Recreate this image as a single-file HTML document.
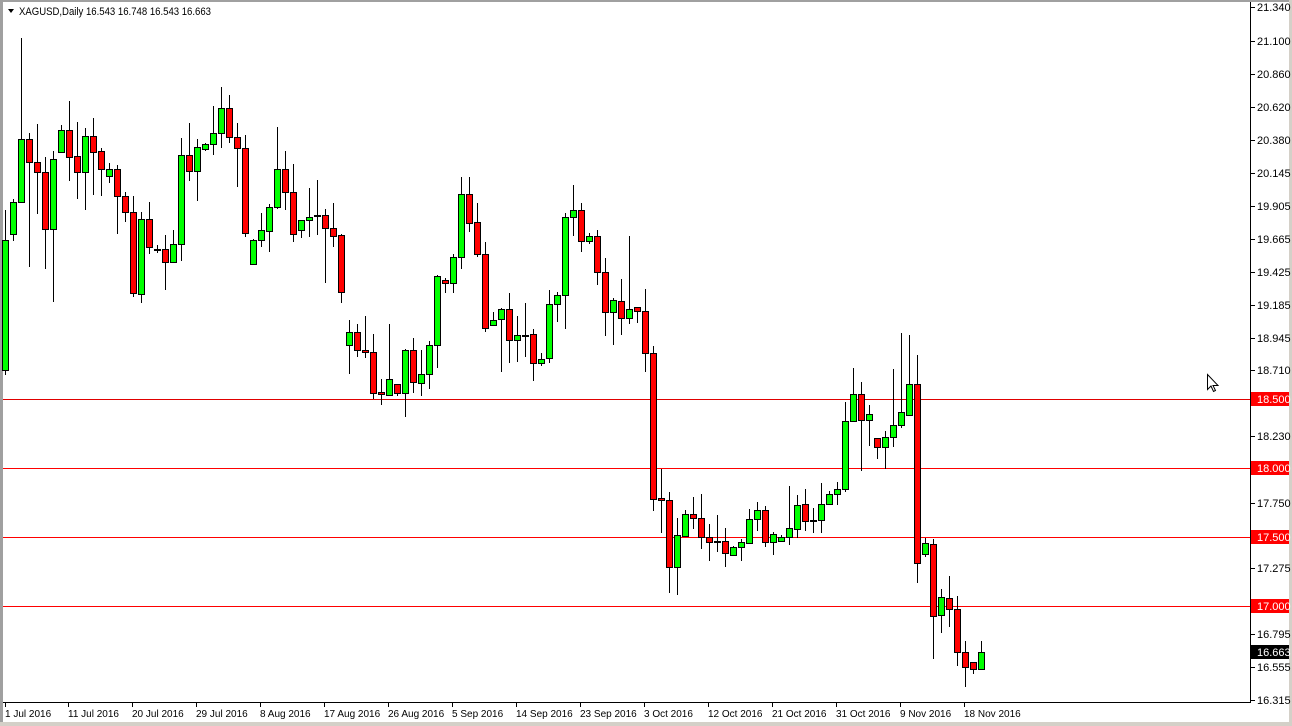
<!DOCTYPE html>
<html><head><meta charset="utf-8"><style>
html,body{margin:0;padding:0;background:#fff;}
body{width:1292px;height:726px;overflow:hidden;position:relative;font-family:"Liberation Sans",sans-serif;}
svg{position:absolute;left:0;top:0;}
text{font-family:"Liberation Sans",sans-serif;font-size:11px;}
.d text{font-size:10px;}
.g{fill:#00ff00;stroke:#000;stroke-width:1}
.r{fill:#ff0000;stroke:#000;stroke-width:1}
</style></head><body>
<svg width="1292" height="726" viewBox="0 0 1292 726">
<rect x="0" y="0" width="1292" height="726" fill="#fff"/>
<rect x="0" y="0" width="1292" height="2" fill="#a0a0a0"/>
<rect x="0" y="0" width="3" height="726" fill="#a0a0a0"/>
<rect x="1289" y="0" width="3" height="726" fill="#d4d0c8"/>
<rect x="0" y="722" width="1292" height="4" fill="#d4d0c8"/>
<rect x="1250" y="2" width="1" height="701" fill="#000"/>
<rect x="3" y="702" width="1248" height="1" fill="#000"/>
<!-- level lines -->
<rect x="3" y="399" width="1247" height="1" fill="#e00000"/>
<rect x="3" y="468" width="1247" height="1" fill="#ff0000"/>
<rect x="3" y="537" width="1247" height="1" fill="#ff0000"/>
<rect x="3" y="606" width="1247" height="1" fill="#ff0000"/>
<g shape-rendering="crispEdges">
<!-- wicks -->
<path stroke="#000" fill="none" d="
M5.5 210V375 M13.5 199V241 M21.5 38V203 M29.5 133V267 M37.5 124V214 M45.5 157V269 M53.5 151V302 M61.5 125V153 M69.5 101V181 M77.5 122V199
M85.5 128V210 M93.5 118V195 M101.5 148V196 M109.5 163V183 M117.5 165V234 M125.5 192V222 M133.5 196V297 M141.5 212V303 M149.5 202V254 M157.5 245V253
M165.5 235V290 M173.5 230V263 M181.5 138V261 M189.5 123V181 M197.5 139V201 M205.5 143V151 M213.5 106V155 M221.5 87V148 M229.5 95V143 M237.5 123V187
M245.5 135V237 M253.5 239V265 M261.5 213V247 M269.5 204V252 M277.5 127V209 M285.5 151V210 M293.5 164V242 M301.5 220V238 M309.5 188V237 M317.5 180V235
M325.5 209V283 M333.5 203V247 M341.5 234V303 M349.5 320V374 M357.5 324V357 M365.5 316V358 M373.5 334V399 M381.5 379V405 M389.5 324V396 M397.5 384V396
M405.5 349V417 M413.5 338V393 M421.5 350V396 M429.5 341V389 M437.5 275V368 M445.5 278V293 M453.5 254V293 M461.5 177V269 M469.5 177V232 M477.5 203V257
M485.5 242V332 M493.5 312V325 M501.5 308V372 M509.5 293V363 M517.5 316V362 M525.5 303V357 M533.5 329V381 M541.5 353V366 M549.5 290V363 M557.5 292V322
M565.5 213V329 M573.5 185V236 M581.5 203V252 M589.5 233V244 M597.5 230V285 M605.5 258V336 M613.5 298V345 M621.5 279V335 M629.5 236V324 M637.5 307V323
M645.5 289V372 M653.5 346V511 M661.5 469V533 M669.5 492V593 M677.5 518V595 M685.5 510V537 M693.5 497V529 M701.5 494V549 M709.5 524V561 M717.5 515V552
M725.5 528V567 M733.5 546V555 M741.5 539V561 M749.5 509V544 M757.5 502V531 M765.5 506V547 M773.5 532V555 M781.5 535V542 M789.5 486V545 M797.5 495V538
M805.5 489V531 M813.5 508V533 M821.5 483V533 M829.5 491V505 M837.5 482V505 M845.5 402V492 M853.5 368V422 M861.5 382V471 M869.5 405V446 M877.5 438V459
M885.5 431V469 M893.5 369V447 M901.5 333V428 M909.5 335V416 M917.5 355V583 M925.5 538V557 M933.5 539V659 M941.5 589V633 M949.5 576V627 M957.5 596V666
M965.5 641V687 M973.5 662V674 M981.5 641V669"/>
<!-- bodies -->
<g>
<rect class="g" x="2.5" y="240.5" width="6" height="130"/>
<rect class="g" x="10.5" y="202.5" width="6" height="32"/>
<rect class="g" x="18.5" y="139.5" width="6" height="63"/>
<rect class="r" x="26.5" y="139.5" width="6" height="23"/>
<rect class="r" x="34.5" y="162.5" width="6" height="10"/>
<rect class="r" x="42.5" y="172.5" width="6" height="57"/>
<rect class="g" x="50.5" y="159.5" width="6" height="70"/>
<rect class="g" x="58.5" y="130.5" width="6" height="22"/>
<rect class="r" x="66.5" y="130.5" width="6" height="27"/>
<rect class="r" x="74.5" y="156.5" width="6" height="16"/>
<rect class="g" x="82.5" y="136.5" width="6" height="36"/>
<rect class="r" x="90.5" y="136.5" width="6" height="16"/>
<rect class="r" x="98.5" y="151.5" width="6" height="18"/>
<rect class="g" x="106.5" y="169.5" width="6" height="7"/>
<rect class="r" x="114.5" y="169.5" width="6" height="27"/>
<rect class="r" x="122.5" y="196.5" width="6" height="16"/>
<rect class="r" x="130.5" y="212.5" width="6" height="81"/>
<rect class="g" x="138.5" y="219.5" width="6" height="75"/>
<rect class="r" x="146.5" y="219.5" width="6" height="28"/>
<rect class="g" x="154.5" y="249.5" width="6" height="1"/>
<rect class="r" x="162.5" y="249.5" width="6" height="13"/>
<rect class="g" x="170.5" y="244.5" width="6" height="18"/>
<rect class="g" x="178.5" y="155.5" width="6" height="89"/>
<rect class="r" x="186.5" y="155.5" width="6" height="16"/>
<rect class="g" x="194.5" y="147.5" width="6" height="24"/>
<rect class="g" x="202.5" y="144.5" width="6" height="5"/>
<rect class="g" x="210.5" y="133.5" width="6" height="11"/>
<rect class="g" x="218.5" y="108.5" width="6" height="25"/>
<rect class="r" x="226.5" y="108.5" width="6" height="29"/>
<rect class="r" x="234.5" y="137.5" width="6" height="11"/>
<rect class="r" x="242.5" y="148.5" width="6" height="85"/>
<rect class="g" x="250.5" y="240.5" width="6" height="24"/>
<rect class="g" x="258.5" y="230.5" width="6" height="10"/>
<rect class="g" x="266.5" y="207.5" width="6" height="24"/>
<rect class="g" x="274.5" y="169.5" width="6" height="38"/>
<rect class="r" x="282.5" y="169.5" width="6" height="23"/>
<rect class="r" x="290.5" y="192.5" width="6" height="42"/>
<rect class="g" x="298.5" y="220.5" width="6" height="10"/>
<rect class="g" x="306.5" y="217.5" width="6" height="3"/>
<rect class="r" x="314.5" y="215.5" width="6" height="1"/>
<rect class="r" x="322.5" y="215.5" width="6" height="13"/>
<rect class="r" x="330.5" y="228.5" width="6" height="8"/>
<rect class="r" x="338.5" y="235.5" width="6" height="57"/>
<rect class="g" x="346.5" y="332.5" width="6" height="13"/>
<rect class="r" x="354.5" y="332.5" width="6" height="18"/>
<rect class="r" x="362.5" y="350.5" width="6" height="2"/>
<rect class="r" x="370.5" y="352.5" width="6" height="41"/>
<rect class="r" x="378.5" y="392.5" width="6" height="2"/>
<rect class="g" x="386.5" y="379.5" width="6" height="16"/>
<rect class="r" x="394.5" y="384.5" width="6" height="9"/>
<rect class="g" x="402.5" y="350.5" width="6" height="43"/>
<rect class="r" x="410.5" y="350.5" width="6" height="32"/>
<rect class="g" x="418.5" y="374.5" width="6" height="9"/>
<rect class="g" x="426.5" y="345.5" width="6" height="29"/>
<rect class="g" x="434.5" y="276.5" width="6" height="69"/>
<rect class="r" x="442.5" y="280.5" width="6" height="3"/>
<rect class="g" x="450.5" y="257.5" width="6" height="26"/>
<rect class="g" x="458.5" y="194.5" width="6" height="63"/>
<rect class="r" x="466.5" y="194.5" width="6" height="29"/>
<rect class="r" x="474.5" y="222.5" width="6" height="32"/>
<rect class="r" x="482.5" y="254.5" width="6" height="74"/>
<rect class="g" x="490.5" y="320.5" width="6" height="5"/>
<rect class="g" x="498.5" y="309.5" width="6" height="10"/>
<rect class="r" x="506.5" y="309.5" width="6" height="31"/>
<rect class="g" x="514.5" y="335.5" width="6" height="5"/>
<rect class="r" x="522.5" y="335.5" width="6" height="1"/>
<rect class="r" x="530.5" y="334.5" width="6" height="29"/>
<rect class="g" x="538.5" y="359.5" width="6" height="4"/>
<rect class="g" x="546.5" y="304.5" width="6" height="54"/>
<rect class="g" x="554.5" y="295.5" width="6" height="9"/>
<rect class="g" x="562.5" y="217.5" width="6" height="78"/>
<rect class="g" x="570.5" y="210.5" width="6" height="7"/>
<rect class="r" x="578.5" y="210.5" width="6" height="31"/>
<rect class="g" x="586.5" y="236.5" width="6" height="5"/>
<rect class="r" x="594.5" y="236.5" width="6" height="36"/>
<rect class="r" x="602.5" y="272.5" width="6" height="40"/>
<rect class="g" x="610.5" y="300.5" width="6" height="12"/>
<rect class="r" x="618.5" y="301.5" width="6" height="17"/>
<rect class="g" x="626.5" y="309.5" width="6" height="9"/>
<rect class="r" x="634.5" y="307.5" width="6" height="4"/>
<rect class="r" x="642.5" y="311.5" width="6" height="42"/>
<rect class="r" x="650.5" y="353.5" width="6" height="146"/>
<rect class="r" x="658.5" y="498.5" width="6" height="2"/>
<rect class="r" x="666.5" y="500.5" width="6" height="67"/>
<rect class="g" x="674.5" y="535.5" width="6" height="32"/>
<rect class="g" x="682.5" y="514.5" width="6" height="22"/>
<rect class="r" x="690.5" y="514.5" width="6" height="4"/>
<rect class="r" x="698.5" y="518.5" width="6" height="19"/>
<rect class="r" x="706.5" y="537.5" width="6" height="5"/>
<rect class="r" x="714.5" y="541.5" width="6" height="1"/>
<rect class="r" x="722.5" y="541.5" width="6" height="12"/>
<rect class="g" x="730.5" y="547.5" width="6" height="8"/>
<rect class="g" x="738.5" y="542.5" width="6" height="5"/>
<rect class="g" x="746.5" y="519.5" width="6" height="24"/>
<rect class="g" x="754.5" y="510.5" width="6" height="9"/>
<rect class="r" x="762.5" y="510.5" width="6" height="32"/>
<rect class="g" x="770.5" y="534.5" width="6" height="8"/>
<rect class="g" x="778.5" y="537.5" width="6" height="4"/>
<rect class="g" x="786.5" y="528.5" width="6" height="9"/>
<rect class="g" x="794.5" y="505.5" width="6" height="24"/>
<rect class="r" x="802.5" y="504.5" width="6" height="17"/>
<rect class="r" x="810.5" y="520.5" width="6" height="1"/>
<rect class="g" x="818.5" y="504.5" width="6" height="16"/>
<rect class="g" x="826.5" y="494.5" width="6" height="10"/>
<rect class="g" x="834.5" y="489.5" width="6" height="5"/>
<rect class="g" x="842.5" y="421.5" width="6" height="68"/>
<rect class="g" x="850.5" y="394.5" width="6" height="27"/>
<rect class="r" x="858.5" y="394.5" width="6" height="26"/>
<rect class="g" x="866.5" y="414.5" width="6" height="6"/>
<rect class="r" x="874.5" y="438.5" width="6" height="9"/>
<rect class="g" x="882.5" y="437.5" width="6" height="10"/>
<rect class="g" x="890.5" y="425.5" width="6" height="12"/>
<rect class="g" x="898.5" y="412.5" width="6" height="13"/>
<rect class="g" x="906.5" y="384.5" width="6" height="31"/>
<rect class="r" x="914.5" y="384.5" width="6" height="179"/>
<rect class="g" x="922.5" y="543.5" width="6" height="11"/>
<rect class="r" x="930.5" y="544.5" width="6" height="72"/>
<rect class="g" x="938.5" y="597.5" width="6" height="18"/>
<rect class="r" x="946.5" y="598.5" width="6" height="11"/>
<rect class="r" x="954.5" y="609.5" width="6" height="43"/>
<rect class="r" x="962.5" y="652.5" width="6" height="15"/>
<rect class="r" x="970.5" y="662.5" width="6" height="7"/>
<rect class="g" x="978.5" y="652.5" width="6" height="17"/>
</g>
<!-- price axis ticks -->
<path stroke="#000" d="M1251 7.5h4M1251 41.5h4M1251 74.5h4M1251 107.5h4M1251 140.5h4M1251 173.5h4M1251 206.5h4M1251 239.5h4M1251 272.5h4M1251 305.5h4M1251 338.5h4M1251 370.5h4M1251 403.5h4M1251 436.5h4M1251 470.5h4M1251 503.5h4M1251 535.5h4M1251 568.5h4M1251 601.5h4M1251 634.5h4M1251 667.5h4M1251 700.5h4"/>
<path stroke="#000" d="M5.5 703v4M68.5 703v4M132.5 703v4M196.5 703v4M260.5 703v4M324.5 703v4M388.5 703v4M452.5 703v4M516.5 703v4M580.5 703v4M644.5 703v4M708.5 703v4M772.5 703v4M836.5 703v4M900.5 703v4M964.5 703v4"/>
</g>
<g fill="#000">
<text x="1257" y="11">21.340</text>
<text x="1257" y="45">21.100</text>
<text x="1257" y="78">20.860</text>
<text x="1257" y="111">20.620</text>
<text x="1257" y="144">20.380</text>
<text x="1257" y="177">20.145</text>
<text x="1257" y="210">19.905</text>
<text x="1257" y="243">19.665</text>
<text x="1257" y="276">19.425</text>
<text x="1257" y="309">19.185</text>
<text x="1257" y="342">18.945</text>
<text x="1257" y="374">18.710</text>
<text x="1257" y="440">18.230</text>
<text x="1257" y="507">17.750</text>
<text x="1257" y="572">17.275</text>
<text x="1257" y="638">16.795</text>
<text x="1257" y="671">16.555</text>
<text x="1257" y="704">16.315</text>
</g>
<rect x="1251" y="392" width="38" height="14" fill="#ff0000"/>
<text x="1257" y="403" fill="#fff">18.500</text>
<rect x="1251" y="461" width="38" height="14" fill="#ff0000"/>
<text x="1257" y="472" fill="#fff">18.000</text>
<rect x="1251" y="530" width="38" height="14" fill="#ff0000"/>
<text x="1257" y="541" fill="#fff">17.500</text>
<rect x="1251" y="599" width="38" height="14" fill="#ff0000"/>
<text x="1257" y="610" fill="#fff">17.000</text>
<rect x="1251" y="645" width="38" height="14" fill="#000"/>
<text x="1257" y="656" fill="#fff">16.663</text>
<!-- date axis -->
<g fill="#000" class="d">
<text x="5" y="717">1 Jul 2016</text>
<text x="68" y="717">11 Jul 2016</text>
<text x="132" y="717">20 Jul 2016</text>
<text x="196" y="717">29 Jul 2016</text>
<text x="260" y="717">8 Aug 2016</text>
<text x="324" y="717">17 Aug 2016</text>
<text x="388" y="717">26 Aug 2016</text>
<text x="452" y="717">5 Sep 2016</text>
<text x="516" y="717">14 Sep 2016</text>
<text x="580" y="717">23 Sep 2016</text>
<text x="644" y="717">3 Oct 2016</text>
<text x="708" y="717">12 Oct 2016</text>
<text x="772" y="717">21 Oct 2016</text>
<text x="836" y="717">31 Oct 2016</text>
<text x="900" y="717">9 Nov 2016</text>
<text x="964" y="717">18 Nov 2016</text>
</g>
<!-- header -->
<path d="M8 9h6l-3 4z" fill="#000"/>
<text x="19" y="15" fill="#000" font-size="10.5" textLength="192" lengthAdjust="spacingAndGlyphs">XAGUSD,Daily  16.543 16.748 16.543 16.663</text>
<!-- cursor -->
<path d="M1207.5 374.5v15l3.5-3.5 2.5 5.5 2-1-2.5-5h5z" fill="#fff" stroke="#000"/>
</svg>
</body></html>
